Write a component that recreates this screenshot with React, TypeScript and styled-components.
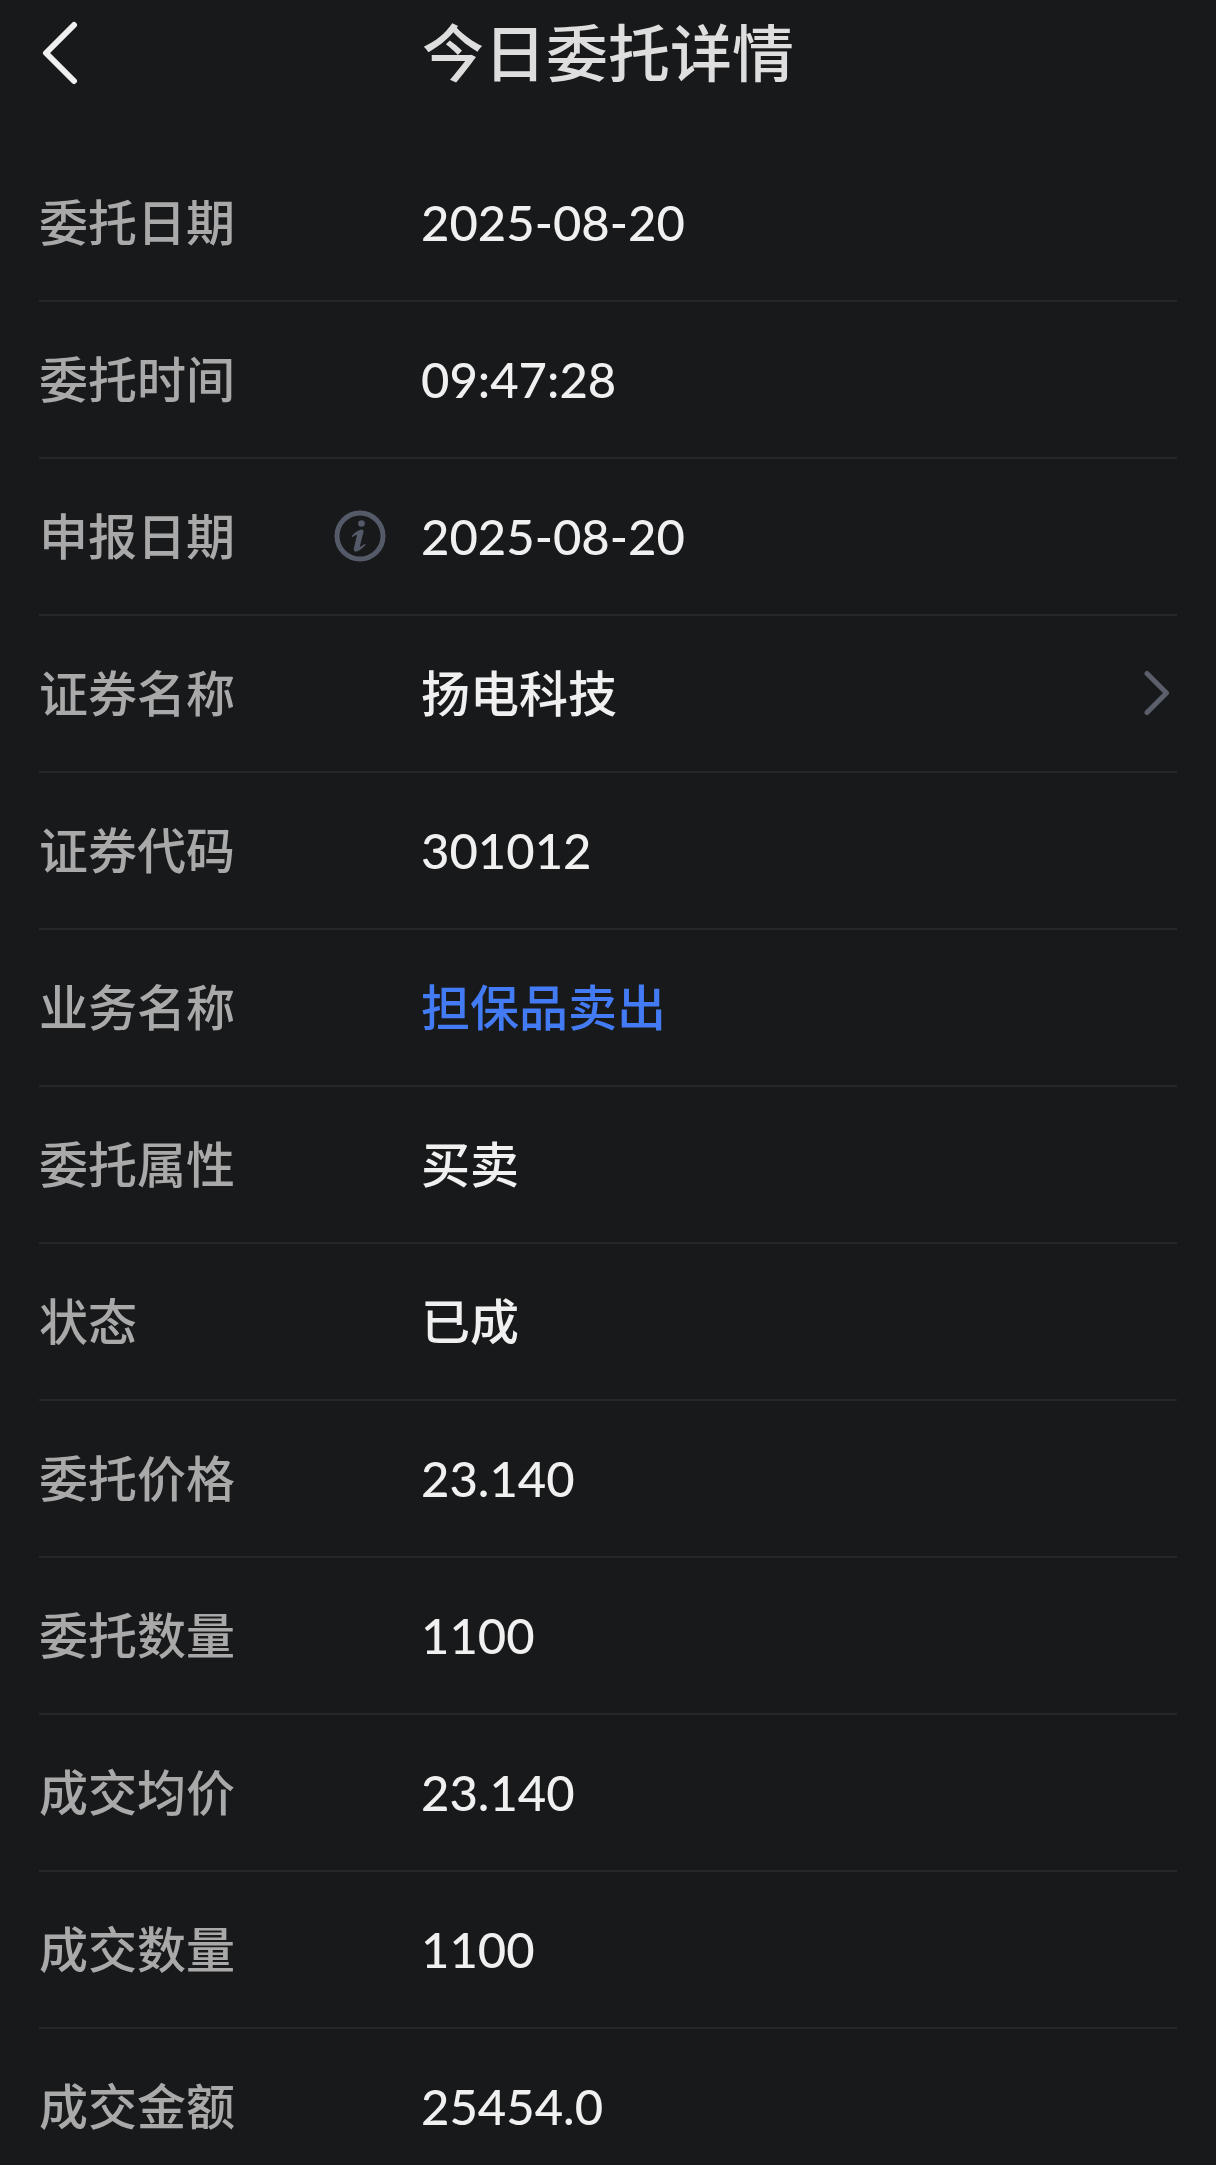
import React from "react";
import styled, { createGlobalStyle } from "styled-components";

const GlobalStyle = createGlobalStyle`
  * {
    box-sizing: border-box;
  }
  body {
    margin: 0;
    background: #18191b;
    font-family: Lato, "Noto Sans CJK SC", sans-serif;
    font-weight: 500;
  }
`;

const Page = styled.main`
  background: #18191b;
  color: #f0f0f0;
`;

const Header = styled.header`
  display: grid;
  grid-template-columns: 60px 1fr 60px;
  align-items: center;
  height: 106px;
  padding: 0 30px;
`;

const Title = styled.h1`
  margin: 0;
  text-align: center;
  font-size: 62px;
  font-weight: 500;
  line-height: 72px;
  color: #dedede;
`;

const IconButton = styled.button`
  display: flex;
  align-items: center;
  justify-content: center;
  padding: 0;
  border: 0;
  background: none;
  color: ${(p) => p.color};
  cursor: pointer;
`;

const Details = styled.dl`
  margin: 0;
  padding: 39px 39px 0;
`;

const Row = styled.div`
  display: grid;
  grid-template-columns: 382px 1fr;
  padding: 42px 0;
  border-bottom: 2px solid #26272a;
  font-size: 49px;
  line-height: 71px;

  &:last-child {
    padding-bottom: 23px;
    border-bottom: 0;
  }
`;

const Label = styled.dt`
  display: flex;
  align-items: center;
  justify-content: space-between;
  padding-right: 35px;
  color: #a9a9a9;
`;

const Value = styled.dd<{ $accent?: boolean }>`
  margin: 0;
  color: ${(p) => (p.$accent ? "#437bf5" : "#f0f0f0")};
`;

const StockLink = styled.a`
  display: flex;
  align-items: center;
  justify-content: space-between;
  padding-right: 7px;
  color: inherit;
  text-decoration: none;
`;

const BackIcon = () => (
  <svg width="36" height="66" viewBox="0 0 36 66" fill="none" aria-hidden="true">
    <path d="M32 5L4 33L32 61" stroke="currentColor" strokeWidth="6" strokeLinecap="round" strokeLinejoin="round" />
  </svg>
);

const InfoIcon = () => (
  <svg width="52" height="54" viewBox="0 0 52 54" fill="none" aria-hidden="true">
    <circle cx="26" cy="26" r="23" stroke="currentColor" strokeWidth="5" />
    <circle cx="27.5" cy="13.5" r="3.3" fill="currentColor" />
    <path
      d="M18.2 25.4C21 22.4 24.6 19.8 27.4 19.4C29.4 19.3 29.8 20.6 29.4 22.2L26 35.8C25.7 37 26 37 26.8 36.5L30.8 34C31.6 33.6 32 34.4 31.4 35.1C28.8 38.2 25 41.4 22.2 41.6C20 41.7 19.4 40 19.9 37.9L22.7 26.4C23 25.2 22.7 24.6 21.7 25.1L19 26.8C18 27.2 17.6 26.2 18.2 25.4Z"
      fill="currentColor"
    />
  </svg>
);

const ChevronIcon = () => (
  <svg width="26" height="48" viewBox="0 0 26 48" fill="none" aria-hidden="true">
    <path d="M3 3.5L22.5 23L3 42.5" stroke="#5b5f6c" strokeWidth="5" strokeLinecap="round" strokeLinejoin="round" />
  </svg>
);

type Item = {
  label: string;
  value: string;
  info?: boolean;
  link?: boolean;
  accent?: boolean;
};

const items: Item[] = [
  { label: "委托日期", value: "2025-08-20" },
  { label: "委托时间", value: "09:47:28" },
  { label: "申报日期", value: "2025-08-20", info: true },
  { label: "证券名称", value: "扬电科技", link: true },
  { label: "证券代码", value: "301012" },
  { label: "业务名称", value: "担保品卖出", accent: true },
  { label: "委托属性", value: "买卖" },
  { label: "状态", value: "已成" },
  { label: "委托价格", value: "23.140" },
  { label: "委托数量", value: "1100" },
  { label: "成交均价", value: "23.140" },
  { label: "成交数量", value: "1100" },
  { label: "成交金额", value: "25454.0" },
];

export default function App() {
  return (
    <Page lang="zh-CN">
      <GlobalStyle />
      <Header>
        <IconButton type="button" color="#f0f0f0" aria-label="返回">
          <BackIcon />
        </IconButton>
        <Title>今日委托详情</Title>
      </Header>
      <Details>
        {items.map((item) => (
          <Row key={item.label}>
            <Label>
              {item.label}
              {item.info && (
                <IconButton type="button" color="#555a69" aria-label="申报日期说明">
                  <InfoIcon />
                </IconButton>
              )}
            </Label>
            <Value $accent={item.accent}>
              {item.link ? (
                <StockLink href="#stock">
                  {item.value}
                  <ChevronIcon />
                </StockLink>
              ) : (
                item.value
              )}
            </Value>
          </Row>
        ))}
      </Details>
    </Page>
  );
}
